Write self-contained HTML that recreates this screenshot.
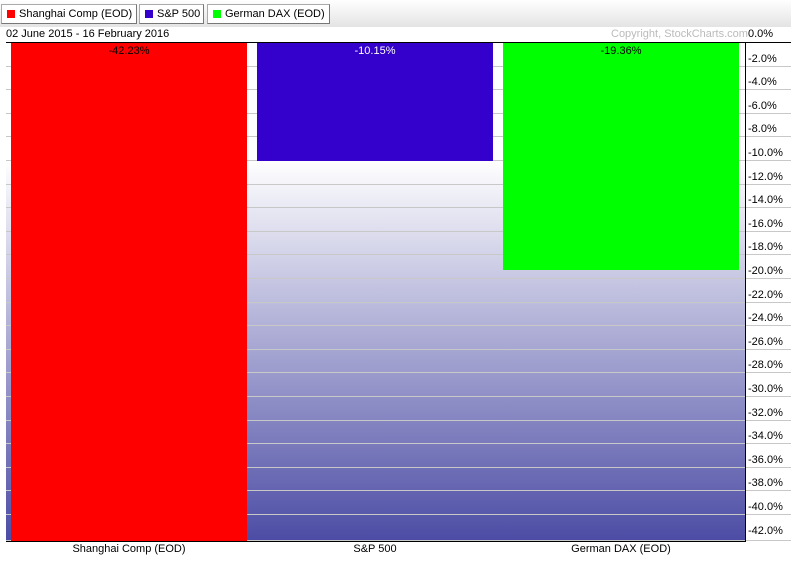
<!DOCTYPE html><html><head><style>
body{margin:0;width:791px;height:564px;overflow:hidden;background:#fff;font-family:"Liberation Sans",Arial,sans-serif;position:relative}
.hdr{position:absolute;left:0;top:0;width:791px;height:27px;background:linear-gradient(#fff,#e4e4e4)}
.btn{position:absolute;top:4px;height:20px;border:1px solid #aaa;border-right-color:#777;border-bottom-color:#777;background:#fff;font-size:11px;line-height:18px;padding-left:17px;box-sizing:border-box;white-space:nowrap;overflow:hidden}
.btn i{position:absolute;left:5px;top:5px;width:8px;height:8px}
.a{position:absolute;white-space:nowrap}
.y{position:absolute;left:748px;font-size:11px;color:#000}
.g{position:absolute;left:6px;width:785px;height:1px;background:#c8c8c8}
</style></head><body>
<div class="hdr"></div>
<div class="btn" style="left:1px;width:136px"><i style="background:#f00"></i>Shanghai Comp (EOD)</div>
<div class="btn" style="left:139px;width:65px"><i style="background:#30c"></i>S&amp;P 500</div>
<div class="btn" style="left:207px;width:123px"><i style="background:#0f0"></i>German DAX (EOD)</div>
<div class="a" style="left:6px;top:28px;font-size:11px">02 June 2015 - 16 February 2016</div>
<div class="a" style="left:611px;top:28px;font-size:11px;color:#bbb">Copyright, StockCharts.com</div>
<div class="a" style="left:6px;top:42px;width:739px;height:499px;background:linear-gradient(#fff 0,#fff 118px,#4c4ca5 499px)"></div>
<div id="grid"></div>
<div class="a" style="left:6px;top:42px;width:785px;height:1px;background:#000"></div>
<div class="a" style="left:6px;top:541px;width:739px;height:1px;background:#000"></div>
<div class="a" style="left:745px;top:42px;width:1px;height:500px;background:#000"></div>
<div class="a" style="left:11px;top:43px;width:236px;height:498px;background:#f00"></div>
<div class="a" style="left:257px;top:43px;width:236px;height:118px;background:#30c"></div>
<div class="a" style="left:503px;top:43px;width:236px;height:227px;background:#0f0"></div>
<div class="a" style="left:11px;top:45px;width:236px;text-align:center;font-size:11px">-42.23%</div>
<div class="a" style="left:257px;top:45px;width:236px;text-align:center;font-size:11px;color:#fff">-10.15%</div>
<div class="a" style="left:503px;top:45px;width:236px;text-align:center;font-size:11px">-19.36%</div>
<div class="a" style="left:11px;top:543px;width:236px;text-align:center;font-size:11px">Shanghai Comp (EOD)</div>
<div class="a" style="left:257px;top:543px;width:236px;text-align:center;font-size:11px">S&amp;P 500</div>
<div class="a" style="left:503px;top:543px;width:236px;text-align:center;font-size:11px">German DAX (EOD)</div>
<div class="y" style="top:28px">0.0%</div>
<script>
var h='';for(var k=1;k<=21;k++){var y=Math.round(42+k*2*11.8);h+='<div class="g" style="top:'+(k==21?540:y)+'px"></div><div class="y" style="top:'+(y-13)+'px">-'+(k*2)+'.0%</div>';}
document.getElementById('grid').innerHTML=h;
</script>
</body></html>
